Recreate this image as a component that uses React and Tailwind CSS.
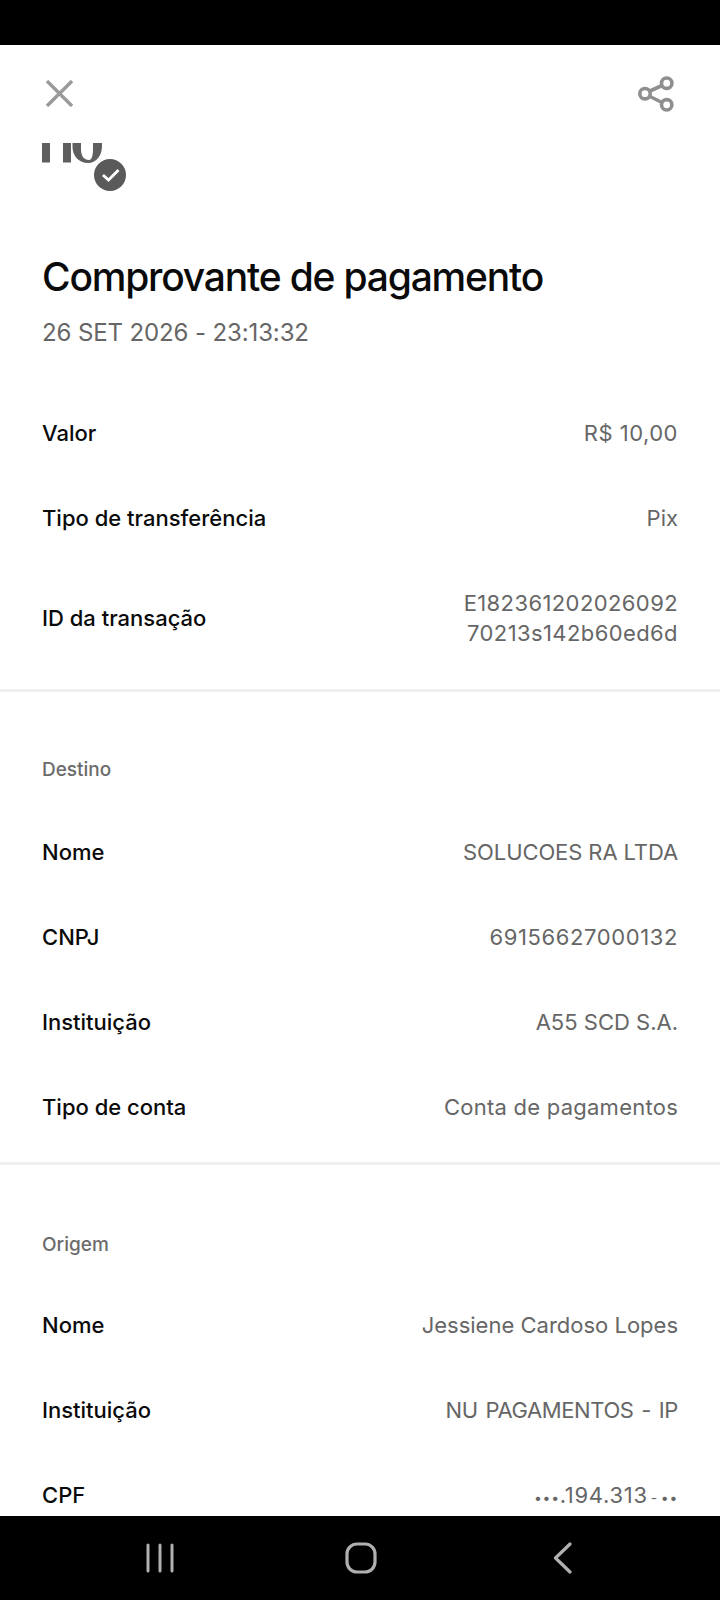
function Row({ label, children, className = "h-[85px]", valueClass = "" }) {
  return (
    <div className={`flex items-center justify-between px-[42px] ${className}`}>
      <span className="text-[22px] leading-[30px] font-medium text-[#0a0a0a] whitespace-nowrap">{label}</span>
      <span className={`text-[22px] leading-[30px] text-[#666666] text-right whitespace-nowrap ${valueClass}`}>{children}</span>
    </div>
  );
}

function SectionTitle({ children }) {
  return <div className="px-[42px] h-[30px] flex items-center text-[19px] font-medium text-[#6b6b6b]">{children}</div>;
}

export default function App() {
  return (
    <div className="w-[720px] h-[1600px] flex flex-col bg-white overflow-hidden font-['Inter',sans-serif]">
      <div className="h-[45px] bg-black shrink-0" />
      <div className="flex-1 min-h-0 overflow-hidden">
        <div className="h-[98px] flex items-center justify-between pl-[46px] pr-[46px]">
          <svg className="mb-[2px]" width="27" height="27" viewBox="0 0 27 27" fill="none" stroke="#9a9a9a" strokeWidth="3.4">
            <path d="M1 1 L26 26 M26 1 L1 26" />
          </svg>
          <svg width="36" height="36" viewBox="0 0 36 36" fill="none" stroke="#8f8f8f" strokeWidth="3.6">
            <circle cx="7" cy="17.7" r="5.2" />
            <circle cx="28.7" cy="7.2" r="5.2" />
            <circle cx="28.7" cy="28.8" r="5.2" />
            <path d="M12 15 L24 9.5 M12 20.5 L24 26.5" />
          </svg>
        </div>
        <div className="relative h-[50px] mx-[42px]">
          <svg className="absolute left-0 top-0" width="62" height="21" viewBox="0 0 62 21" fill="#5f5f5f">
            <rect x="0" y="0" width="8" height="19.5" />
            <rect x="21" y="0" width="8" height="19.5" />
            <path d="M30.5 0 H39 V6 C39 13 42 17 47 17 C50 17 51 12 51 6 V0 H60 V3 C60 13 54 20 46 20 C37 20 30.5 13 30.5 4 Z" />
          </svg>
          <svg className="absolute left-[52px] top-[16px]" width="32" height="32" viewBox="0 0 32 32">
            <circle cx="16" cy="16" r="16" fill="#5a5a5a" />
            <path d="M9 16 L14.5 21 L24.5 11" fill="none" stroke="#fff" strokeWidth="2.8" />
          </svg>
        </div>
        <h1 className="mt-[57px] px-[42px] text-[39px] leading-[54px] font-medium text-[#0a0a0a] tracking-[-1.2px] whitespace-nowrap">Comprovante de pagamento</h1>
        <div className="mt-[13px] px-[42px] text-[24px] leading-[32px] tracking-[-0.12px] text-[#666666]">26 SET 2026 - 23:13:32</div>

        <div className="mt-[41px]">
          <Row label="Valor" valueClass="tracking-[0.5px]">R$ 10,00</Row>
          <Row label="Tipo de transferência">Pix</Row>
          <Row label="ID da transação" className="h-[116px]" valueClass="tracking-[0.4px]">E182361202026092<br />70213s142b60ed6d</Row>
        </div>
        <div className="h-[3px] bg-[#efefef] mt-[13px]" />
        <div className="mt-[63px]"><SectionTitle>Destino</SectionTitle></div>
        <div className="mt-[24px]">
          <Row label="Nome" valueClass="tracking-[-0.1px]">SOLUCOES RA LTDA</Row>
          <Row label="CNPJ" valueClass="tracking-[0.6px]">69156627000132</Row>
          <Row label="Instituição">A55 SCD S.A.</Row>
          <Row label="Tipo de conta" valueClass="tracking-[0.25px]">Conta de pagamentos</Row>
        </div>
        <div className="h-[3px] bg-[#efefef] mt-[13px]" />
        <div className="mt-[65px]"><SectionTitle>Origem</SectionTitle></div>
        <div className="mt-[22px]">
          <Row label="Nome">Jessiene Cardoso Lopes</Row>
          <Row label="Instituição" valueClass="tracking-[-0.4px] [word-spacing:2px]">NU PAGAMENTOS - IP</Row>
          <Row label="CPF" valueClass="tracking-[0.7px]"><span className="text-[14px] leading-[0]">•••</span>.194.313<span className="text-[14px] leading-[0] mx-[3px]">-</span><span className="text-[14px] leading-[0]">••</span></Row>
        </div>
      </div>
      <div className="h-[84px] bg-black shrink-0 flex items-center">
        <svg className="ml-[145px]" width="30" height="30" viewBox="0 0 30 30" stroke="#b0b0b0" strokeWidth="3" strokeLinecap="round">
          <path d="M3 2 V28 M15 2 V28 M27 2 V28" />
        </svg>
        <svg className="ml-[170px]" width="32" height="32" viewBox="0 0 32 32" fill="none" stroke="#b0b0b0" strokeWidth="3.2">
          <rect x="2" y="2" width="28" height="28" rx="10" />
        </svg>
        <svg className="ml-[175px]" width="22" height="32" viewBox="0 0 22 32" fill="none" stroke="#b0b0b0" strokeWidth="3.2" strokeLinecap="round" strokeLinejoin="round">
          <path d="M18 2 L3.5 16 L18 30" />
        </svg>
      </div>
    </div>
  );
}
